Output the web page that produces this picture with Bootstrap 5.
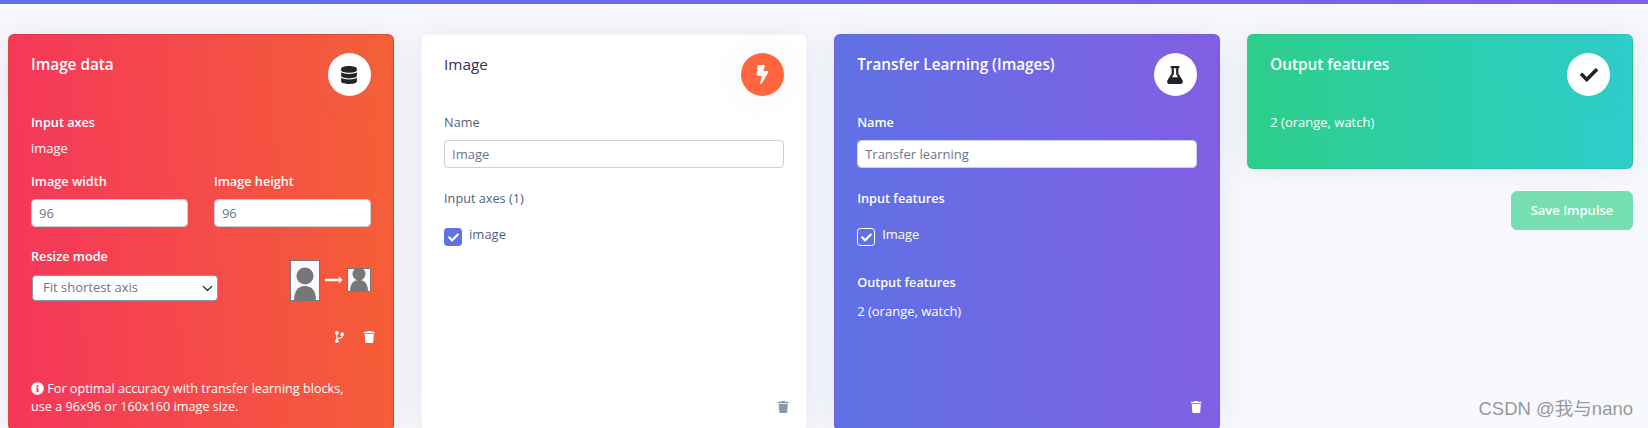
<!DOCTYPE html>
<html lang="en">
<head>
<meta charset="utf-8">
<title>Impulse design</title>
<link href="https://cdn.jsdelivr.net/npm/bootstrap@5.3.0/dist/css/bootstrap.min.css" rel="stylesheet">
<style>
html,body{height:428px;overflow:hidden}
body{background:#f8f9fe;font-family:"Open Sans","Noto Sans CJK SC",sans-serif;font-size:13px;color:#525f7f}
.topline{height:4px;background:linear-gradient(87deg,#5e72e4,#825ee4)}
.stage{padding:30px 15px 0 8px}
.stage>.row{--bs-gutter-x:27.33px}
.blockcard{border:1px solid rgba(0,0,0,.04);border-radius:6px;box-shadow:0 0 32px rgba(136,152,170,.18);padding:18px 22px 17px;color:#fff}
.fullcard{height:397px}
.shortcard{height:135px}
.g-red{background:linear-gradient(87deg,#f5365c,#f56036);border-color:rgba(190,40,50,.35)}
.g-blue{background:linear-gradient(87deg,#5e72e4,#825ee4)}
.g-green{background:linear-gradient(87deg,#2dce89,#2dcecc)}
.g-white{background:#fff;color:#525f7f}
.headrow{height:43px;margin-bottom:17px}
.blocktitle{font-size:15.300px;font-weight:600;line-height:22px;margin:0;color:inherit}
.g-white .blocktitle{color:#32325d;font-weight:500}
.circ{width:43px;height:43px;border-radius:50%;background:#fff;color:#212529;flex:none;box-shadow:0 0 32px rgba(136,152,170,.12)}
.circ svg{height:18px;width:18px;fill:currentColor}
.circ-orange{background:#ff6640;color:#fff}
.circ-orange svg{height:19px;width:13px}
.lbl{font-weight:600;font-size:12.700px;line-height:18px;margin-bottom:9px;display:block}
.g-white .lbl{font-weight:500}
.val{line-height:18px}
.gap-image{margin-bottom:15px}
.fld,.form-select.fld{height:28px;border:1px solid #cad1d7;border-radius:4px;font-size:13px;padding:0 7px;color:#6b768d;box-shadow:none;background-color:#fff}
.form-select.fld{width:186px;height:26px;margin-left:1px;padding-right:24px;padding-left:10px;background-position:right 3px center;background-size:13px 11px;border-color:#8d95a8}
.two-up{--bs-gutter-x:26px;margin-bottom:20px}
.sel-lbl{margin-bottom:10px}
.tick-row{display:flex;gap:7px;align-items:flex-start;line-height:18px;margin:21px 0 27px}
.tick-row span{margin-top:-3px}
.tick{width:18px;height:18px;margin:0;border-radius:4px;flex:none;--bs-form-check-bg:#5e72e4;background-color:#5e72e4;border:1px solid #5e72e4;background-size:11px}
.tick:checked{background-color:#5e72e4;border-color:#5e72e4;background-image:url("data:image/svg+xml,%3csvg xmlns='http://www.w3.org/2000/svg' viewBox='0 0 512 512'%3e%3cpath fill='%23fff' d='M173.9 439.4l-166.400-166.400c-10-10-10-26.200 0-36.200l36.200-36.200c10-10 26.200-10 36.200 0L192 312.700 432.100 72.600c10-10 26.200-10 36.200 0l36.200 36.200c10 10 10 26.200 0 36.200l-294.400 294.400c-10 10-26.200 10-36.200 0z'/%3e%3c/svg%3e")}
.g-blue .tick:checked{background-color:transparent;border-color:#fff}
.name-lbl{margin-bottom:9px}
.after-field{margin-top:21px;margin-bottom:0}
.out-val{margin-top:11px;line-height:18px}
.resizepic{margin-top:-1px;flex:none}
.minis{color:#fff;margin-top:30px;gap:20px;margin-right:-4px}
.minis svg{height:12px;fill:currentColor;display:block}
.bottomtrash{margin-top:auto;margin-right:-5px;color:#fff}
.g-white .bottomtrash{color:#8898aa}
.bottomtrash svg{height:12px;fill:currentColor;display:block}
.infotext{margin-top:auto;font-size:12.650px;line-height:18px;margin-bottom:-2px}
.infotext svg{height:13px;width:13px;fill:#fff;vertical-align:-2px}
.savebtn{width:122px;height:39px;padding:0;margin-top:22px;font-size:13px;font-weight:600;color:#fff;background:#76dfb2;border:1px solid #76dfb2;border-radius:6px;opacity:1}
.savebtn:disabled{color:#fff;background:#76dfb2;border-color:#76dfb2;opacity:1}
.mark-csdn{position:absolute;right:15px;top:399px;font-family:"Liberation Sans","Noto Sans CJK SC",sans-serif;font-size:18.500px;line-height:20px;color:#999}
</style>
</head>
<body>
<div class="topline"></div>
<div class="stage">
  <div class="row">
    <div class="col-3">
      <div class="blockcard fullcard g-red d-flex flex-column">
        <div class="headrow d-flex justify-content-between">
          <h2 class="blocktitle">Image data</h2>
          <div class="circ d-flex align-items-center justify-content-center">
            <svg viewBox="0 0 448 512"><path d="M448 73.143v45.714C448 159.143 347.667 192 224 192S0 159.143 0 118.857V73.143C0 32.857 100.333 0 224 0s224 32.857 224 73.143zM448 176v102.857C448 319.143 347.667 352 224 352S0 319.143 0 278.857V176c48.125 33.143 136.208 48.572 224 48.572S399.874 209.143 448 176zm0 160v102.857C448 479.143 347.667 512 224 512S0 479.143 0 438.857V336c48.125 33.143 136.208 48.572 224 48.572S399.874 369.143 448 336z"/></svg>
          </div>
        </div>
        <span class="lbl mb-2">Input axes</span>
        <div class="val gap-image">image</div>
        <div class="row two-up">
          <div class="col-6">
            <label class="lbl" for="iw">Image width</label>
            <input id="iw" class="form-control fld" value="96">
          </div>
          <div class="col-6">
            <label class="lbl" for="ih">Image height</label>
            <input id="ih" class="form-control fld" value="96">
          </div>
        </div>
        <div class="d-flex justify-content-between align-items-end">
          <div>
            <label class="lbl sel-lbl" for="rm">Resize mode</label>
            <select id="rm" class="form-select fld"><option>Fit shortest axis</option></select>
          </div>
          <svg class="resizepic" width="81" height="41" viewBox="0 0 81 41">
            <defs>
              <clipPath id="pa"><rect x="0" y="0" width="30" height="41"/></clipPath>
              <clipPath id="pb"><rect x="57" y="8" width="24" height="24"/></clipPath>
            </defs>
            <rect x=".5" y=".5" width="29" height="40" fill="#f8f9fe" stroke="#777"/>
            <g clip-path="url(#pa)" fill="#777">
              <circle cx="15" cy="16" r="8.500"/>
              <path d="M4 41c0-10 4-15 11-15s11 5 11 15z"/>
            </g>
            <path d="M35 20h15" stroke="#fff" stroke-width="2.500"/>
            <path d="M49 16.500l3.500 3.500-3.500 3.500z" fill="#fff"/>
            <rect x="57.500" y="8.500" width="23" height="23" fill="#f8f9fe" stroke="#777"/>
            <g clip-path="url(#pb)" fill="#777">
              <circle cx="69" cy="14" r="6.500"/>
              <path d="M60 32c0-8 3-12 9-12s9 4 9 12z"/>
            </g>
          </svg>
        </div>
        <div class="minis d-flex justify-content-end">
          <svg viewBox="0 0 384 512"><path d="M384 144a80 80 0 1 0-102.500 76.800c-.6 16.100-4.200 28.500-11 36.900-15.400 19.200-49.300 22.400-85.200 25.700-28.200 2.600-57.400 5.400-81.300 16.900v-144a80 80 0 1 0-48 0v199.300a80 80 0 1 0 52.800 1.800c3.100-5.200 7.800-9.800 14.900-13.400 16.200-8.200 40.400-10.400 66.100-12.800 42.200-3.900 90-8.400 118.200-43.400 14-17.400 21.100-39.800 21.600-67.900 31.600-10.800 54.400-40.700 54.400-75.900z"/></svg>
          <svg viewBox="0 0 448 512"><path d="M432 32H312l-9.400-18.700A24 24 0 0 0 281.100 0H166.800a23.720 23.720 0 0 0-21.400 13.300L136 32H16A16 16 0 0 0 0 48v32a16 16 0 0 0 16 16h416a16 16 0 0 0 16-16V48a16 16 0 0 0-16-16zM53.200 467a48 48 0 0 0 47.900 45h245.800a48 48 0 0 0 47.900-45L416 128H32z"/></svg>
        </div>
        <p class="infotext">
          <svg viewBox="0 0 512 512"><path d="M256 8C119.043 8 8 119.083 8 256c0 136.997 111.043 248 248 248s248-111.003 248-248C504 119.083 392.957 8 256 8zm0 110c23.196 0 42 18.804 42 42s-18.804 42-42 42-42-18.804-42-42 18.804-42 42-42zm56 254c0 6.627-5.373 12-12 12h-88c-6.627 0-12-5.373-12-12v-24c0-6.627 5.373-12 12-12h12v-64h-12c-6.627 0-12-5.373-12-12v-24c0-6.627 5.373-12 12-12h64c6.627 0 12 5.373 12 12v100h12c6.627 0 12 5.373 12 12v24z"/></svg>
          For optimal accuracy with transfer learning blocks,<br>use a 96x96 or 160x160 image size.
        </p>
      </div>
    </div>
    <div class="col-3">
      <div class="blockcard fullcard g-white d-flex flex-column">
        <div class="headrow d-flex justify-content-between">
          <h2 class="blocktitle">Image</h2>
          <div class="circ circ-orange d-flex align-items-center justify-content-center">
            <svg viewBox="0 0 320 512"><path d="M296 160H180.600l42.600-129.800C227.200 15 215.700 0 200 0H56C44 0 33.800 8.900 32.200 20.800l-32 240C-1.700 275.200 9.500 288 24 288h118.700L96.600 482.500c-3.600 15.200 8 29.500 23.300 29.500 8.400 0 16.400-4.400 20.800-12l176-304c9.300-15.900-2.200-36-20.700-36z"/></svg>
          </div>
        </div>
        <label class="lbl name-lbl" for="n1">Name</label>
        <input id="n1" class="form-control fld" value="Image">
        <span class="lbl after-field">Input axes (1)</span>
        <div class="tick-row">
          <input class="form-check-input tick" type="checkbox" checked>
          <span>image</span>
        </div>
        <div class="bottomtrash d-flex justify-content-end">
          <svg viewBox="0 0 448 512"><path d="M432 32H312l-9.400-18.700A24 24 0 0 0 281.100 0H166.800a23.720 23.720 0 0 0-21.400 13.300L136 32H16A16 16 0 0 0 0 48v32a16 16 0 0 0 16 16h416a16 16 0 0 0 16-16V48a16 16 0 0 0-16-16zM53.200 467a48 48 0 0 0 47.900 45h245.800a48 48 0 0 0 47.900-45L416 128H32z"/></svg>
        </div>
      </div>
    </div>
    <div class="col-3">
      <div class="blockcard fullcard g-blue d-flex flex-column">
        <div class="headrow d-flex justify-content-between">
          <h2 class="blocktitle">Transfer Learning (Images)</h2>
          <div class="circ d-flex align-items-center justify-content-center">
            <svg viewBox="0 0 448 512"><path d="M437.200 403.500L320 215V64h8c13.300 0 24-10.700 24-24V24c0-13.300-10.700-24-24-24H120c-13.300 0-24 10.700-24 24v16c0 13.300 10.700 24 24 24h8v151L10.800 403.500C-18.500 450.600 15.300 512 70.900 512h306.200c55.700 0 89.400-61.500 60.100-108.500zM137.900 320l48.200-77.600c3.700-5.200 5.800-11.600 5.800-18.400V64h64v160c0 6.900 2.200 13.200 5.800 18.400l48.200 77.600h-172z"/></svg>
          </div>
        </div>
        <label class="lbl name-lbl" for="n2">Name</label>
        <input id="n2" class="form-control fld" value="Transfer learning">
        <span class="lbl after-field">Input features</span>
        <div class="tick-row">
          <input class="form-check-input tick" type="checkbox" checked>
          <span>Image</span>
        </div>
        <span class="lbl mb-0">Output features</span>
        <div class="out-val">2 (orange, watch)</div>
        <div class="bottomtrash d-flex justify-content-end">
          <svg viewBox="0 0 448 512"><path d="M432 32H312l-9.400-18.700A24 24 0 0 0 281.100 0H166.800a23.720 23.720 0 0 0-21.400 13.300L136 32H16A16 16 0 0 0 0 48v32a16 16 0 0 0 16 16h416a16 16 0 0 0 16-16V48a16 16 0 0 0-16-16zM53.200 467a48 48 0 0 0 47.900 45h245.800a48 48 0 0 0 47.900-45L416 128H32z"/></svg>
        </div>
      </div>
    </div>
    <div class="col-3">
      <div class="blockcard shortcard g-green">
        <div class="headrow d-flex justify-content-between">
          <h2 class="blocktitle">Output features</h2>
          <div class="circ d-flex align-items-center justify-content-center">
            <svg viewBox="0 0 512 512"><path d="M173.898 439.404l-166.400-166.400c-9.997-9.997-9.997-26.206 0-36.204l36.203-36.204c9.997-9.998 26.207-9.998 36.204 0L192 312.690 432.095 72.596c9.997-9.997 26.207-9.997 36.204 0l36.203 36.204c9.997 9.997 9.997 26.206 0 36.204l-294.400 294.401c-9.998 9.997-26.207 9.997-36.204-.001z"/></svg>
          </div>
        </div>
        <div class="val">2 (orange, watch)</div>
      </div>
      <div class="d-flex justify-content-end">
        <button class="btn savebtn" disabled>Save Impulse</button>
      </div>
    </div>
  </div>
</div>
<div class="mark-csdn">CSDN @我与nano</div>
</body>
</html>
